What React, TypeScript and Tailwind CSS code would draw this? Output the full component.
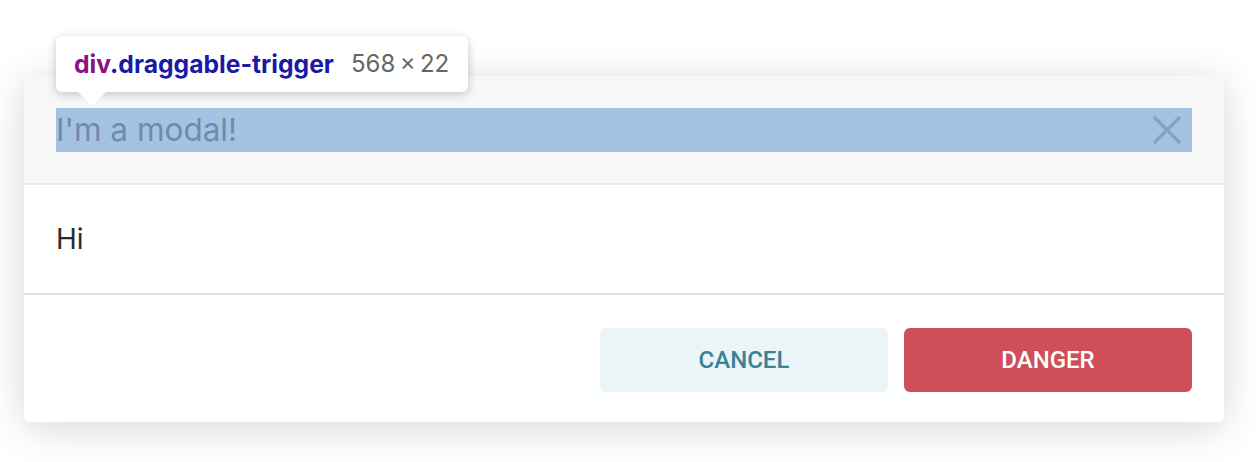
import React from "react";

const font = { fontFamily: "Inter, 'Noto Sans', sans-serif" };

export default function App() {
  return (
    <div className="relative h-[462px] w-full overflow-hidden bg-white px-6 pt-[76px]" style={font}>
      {/* Modal */}
      <div className="w-[1200px] overflow-hidden rounded-md bg-white shadow-[0_6px_40px_rgba(0,0,0,0.16)]">
        {/* Header */}
        <div className="border-b-2 border-[#ebebeb] bg-[#f7f7f7] px-8 pt-8 pb-[31px]">
          <div className="relative flex h-11 items-center justify-between">
            <span className="text-[31.5px] leading-[44px] text-[#555]">I'm a modal!</span>
            <svg width="30" height="30" viewBox="0 0 30 30" className="mr-[10px]">
              <path d="M2 2 L28 28 M28 2 L2 28" stroke="#9a9a9a" strokeWidth="3.5" strokeLinecap="butt" />
            </svg>
            {/* devtools highlight */}
            <div className="absolute inset-0 bg-[rgba(121,167,215,0.66)]" />
          </div>
        </div>

        {/* Body */}
        <div className="border-b-2 border-[#dedede] px-8 py-8">
          <p className="text-[28px] leading-[44px] text-[#2b2b2b]">Hi</p>
        </div>

        {/* Footer */}
        <div className="flex justify-end gap-4 px-8 pt-[33px] pb-[30px]">
          <button
            type="button"
            className="flex h-16 w-[288px] items-center justify-center rounded-md bg-[#eaf5f7] text-[24px] font-medium text-[#3b8196]"
            style={{ fontFamily: "Roboto, sans-serif" }}
          >
            CANCEL
          </button>
          <button
            type="button"
            className="flex h-16 w-[288px] items-center justify-center rounded-md bg-[#cf4f58] text-[24px] font-medium text-white"
            style={{ fontFamily: "Roboto, sans-serif" }}
          >
            DANGER
          </button>
        </div>
      </div>

      {/* Devtools tooltip */}
      <div className="absolute left-[56px] top-[36px]">
        <div className="flex h-14 w-[412px] items-center gap-[17px] rounded-md bg-white pl-[18px] shadow-[0_2px_10px_rgba(0,0,0,0.22)]">
          <span className="text-[24.7px] font-bold leading-none">
            <span className="text-[#881280]">div</span>
            <span className="text-[#1a1aa6]">.draggable-trigger</span>
          </span>
          <span className="text-[24px] leading-none text-[#666]">568{"\u2009×\u2009"}22</span>
        </div>
        <svg width="30" height="16" viewBox="0 0 30 16" className="absolute left-[21px] top-[55px]">
          <path d="M0 0 L15 15 L30 0 Z" fill="white" />
        </svg>
      </div>
    </div>
  );
}
